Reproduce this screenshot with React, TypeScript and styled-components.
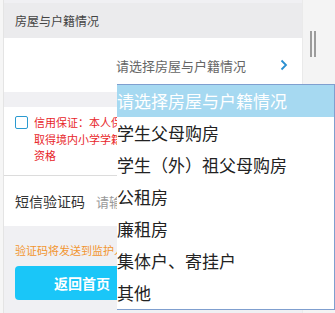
import React from 'react'
import styled, { createGlobalStyle } from 'styled-components'

const GlobalStyle = createGlobalStyle`
  html, body {
    margin: 0;
    padding: 0;
    width: 335px;
    height: 313px;
    overflow: hidden;
    background: #f6f6f6;
    font-family: "Noto Sans CJK SC", "Liberation Sans", sans-serif;
  }
`

const options = [
  '请选择房屋与户籍情况',
  '学生父母购房',
  '学生（外）祖父母购房',
  '公租房',
  '廉租房',
  '集体户、寄挂户',
  '其他',
]

export default function App() {
  return (
    <>
      <GlobalStyle />
      <Screen>
        <Main>
          <SectionTitle>房屋与户籍情况</SectionTitle>
          <PickRow>
            <PickValue>请选择房屋与户籍情况</PickValue>
            <Chevron viewBox="0 0 8 12">
              <path d="M1.5 1.5 L6 6 L1.5 10.5" fill="none" stroke="#2a8fd0" strokeWidth="1.8" />
            </Chevron>
          </PickRow>
          <Gap />
          <PledgeBlock>
            <CheckBox />
            <PledgeText>
              信用保证：本人保证所填信息真实有效，如有虚假，<br />
              取得境内小学学籍及入学资格将被取消，并承担相应责任<br />
              资格
            </PledgeText>
          </PledgeBlock>
          <CodeRow>
            <CodeLabel>短信验证码</CodeLabel>
            <CodeInput placeholder="请输入验证码" />
          </CodeRow>
          <Notice>验证码将发送到监护人手机</Notice>
          <BackButton>返回首页</BackButton>
        </Main>
        <Side>
          <Grip />
        </Side>
        <Dropdown>
          {options.map((o, i) => (
            <Option key={o} $active={i === 0}>{o}</Option>
          ))}
        </Dropdown>
      </Screen>
    </>
  )
}

const Screen = styled.div`
  position: relative;
  display: flex;
  width: 335px;
  height: 313px;
  overflow: hidden;
`

const Main = styled.div`
  width: 299px;
  margin-left: 3px;
  display: flex;
  flex-direction: column;
  background: #f0f0f3;
  border-left: 1px solid #e4e4e4;
  box-sizing: border-box;
`

const SectionTitle = styled.div`
  height: 35px;
  margin-top: 3px;
  padding-left: 11px;
  display: flex;
  align-items: center;
  font-size: 12px;
  color: #444;
  background: #ebebed;
`

const PickRow = styled.div`
  height: 54px;
  display: flex;
  align-items: center;
  justify-content: flex-end;
  padding-right: 14px;
  background: #fff;
`

const PickValue = styled.span`
  font-size: 13px;
  color: #666;
  margin-right: 34px;
`

const Chevron = styled.svg`
  width: 8px;
  height: 12px;
`

const Gap = styled.div`
  height: 15px;
`

const PledgeBlock = styled.div`
  height: 69px;
  display: flex;
  align-items: flex-start;
  gap: 6px;
  padding: 9px 0 0 11px;
  box-sizing: border-box;
  background: #fff;
  border-bottom: 1px solid #dcdcdc;
`

const CheckBox = styled.div`
  width: 11px;
  height: 11px;
  border: 1.5px solid #2b9ad0;
  border-radius: 2px;
  flex: none;
`

const PledgeText = styled.div`
  width: 85px;
  overflow: hidden;
  font-size: 11px;
  line-height: 16.5px;
  color: #e8262a;
  white-space: nowrap;
  margin-top: -2px;
`

const CodeRow = styled.div`
  height: 50px;
  display: flex;
  align-items: center;
  padding-left: 11px;
  background: #fff;
`

const CodeLabel = styled.span`
  font-size: 14px;
  color: #333;
  width: 81px;
`

const CodeInput = styled.input`
  border: none;
  outline: none;
  font-family: inherit;
  font-size: 13px;
  color: #333;
  width: 22px;
  padding: 0;
  &::placeholder {
    color: #999;
  }
`

const Notice = styled.div`
  width: 102px;
  overflow: hidden;
  margin-top: 16px;
  padding-left: 11px;
  font-size: 11px;
  color: #f2952f;
  white-space: nowrap;
`

const BackButton = styled.button`
  margin: 8px 10px 0 11px;
  height: 34px;
  border: none;
  border-radius: 4px;
  background: #1ac6f8;
  color: #fff;
  font-family: inherit;
  font-size: 14px;
  font-weight: 700;
  text-align: left;
  padding-left: 39px;
`

const Side = styled.div`
  flex: 1;
  background: #f4f4f4;
  border-left: 1px solid #eaeaea;
  position: relative;
`

const Grip = styled.div`
  position: absolute;
  left: 7px;
  top: 31px;
  width: 6px;
  height: 26px;
  border-left: 2px solid #9c9c9c;
  border-right: 2px solid #9c9c9c;
  box-sizing: border-box;
`

const Dropdown = styled.div`
  position: absolute;
  left: 117px;
  top: 84px;
  width: 218px;
  height: 226px;
  box-sizing: border-box;
  background: #fff;
  border: 1px solid #7f9fcf;
  border-left: none;
  display: flex;
  flex-direction: column;
`

const Option = styled.div<{ $active: boolean }>`
  height: 31.9px;
  flex: none;
  display: flex;
  align-items: center;
  font-size: 17px;
  color: ${p => (p.$active ? '#fff' : '#222')};
  background: ${p => (p.$active ? '#a6d9f1' : 'transparent')};
  white-space: nowrap;
`
